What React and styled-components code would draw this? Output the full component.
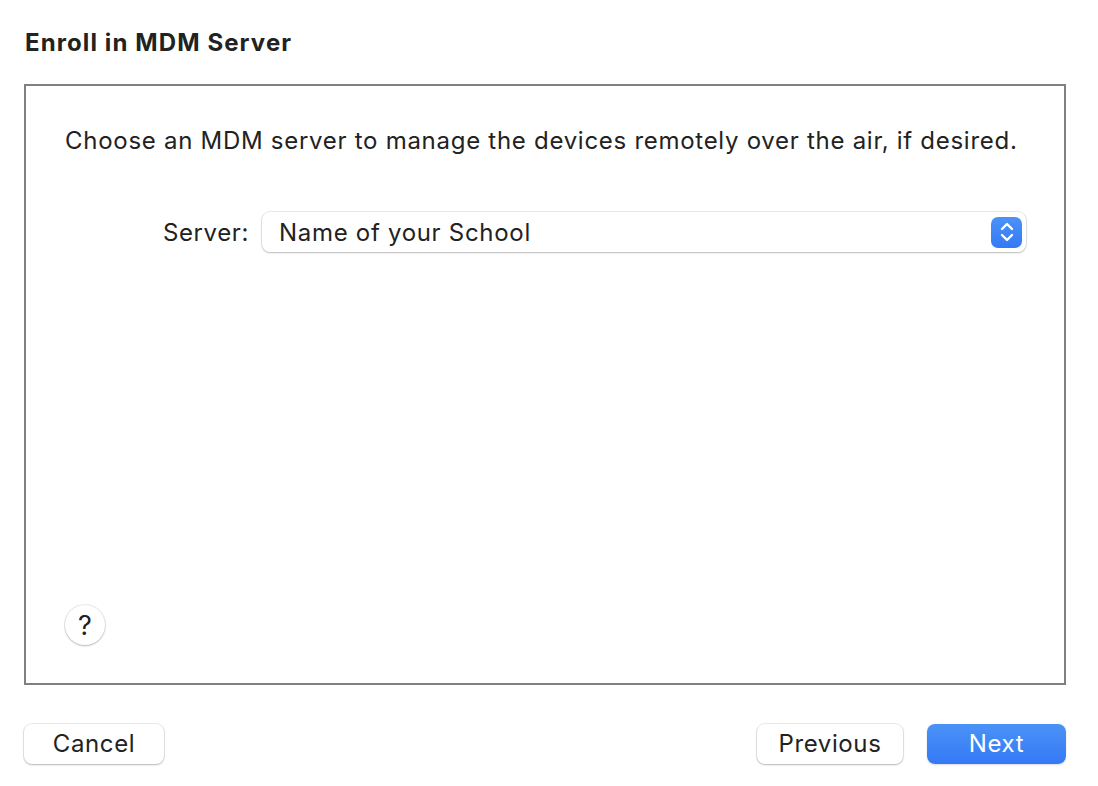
import React from 'react'
import styled, { createGlobalStyle } from 'styled-components'

const Global = createGlobalStyle`
  html, body {
    margin: 0;
    padding: 0;
    background: #fff;
  }
  body {
    font-family: Inter, 'Noto Sans', 'Liberation Sans', sans-serif;
    color: #222;
  }
`

const Page = styled.div`
  width: 1098px;
  height: 786px;
  box-sizing: border-box;
  padding: 28px 32px 0 24px;
  display: flex;
  flex-direction: column;
`

const Title = styled.h1`
  margin: 0 0 0 1px;
  font-size: 24px;
  line-height: 30px;
  font-weight: 700;
  letter-spacing: 1.1px;
  color: #222;
`

const Panel = styled.div`
  margin-top: 26px;
  height: 601px;
  box-sizing: border-box;
  border: 2px solid #808080;
  padding: 40px 38px 38px 39px;
  display: flex;
  flex-direction: column;
`

const Description = styled.p`
  margin: 0;
  font-size: 24px;
  line-height: 30px;
  letter-spacing: 0.72px;
  color: #222;
`

const FieldRow = styled.div`
  margin-top: 56px;
  display: flex;
  align-items: center;
  gap: 13px;
  padding-left: 98px;
`

const Label = styled.label`
  font-size: 24px;
  letter-spacing: 0.6px;
  color: #222;
`

const Select = styled.div`
  flex: 1;
  height: 40px;
  box-sizing: border-box;
  border-radius: 8px;
  background: #fff;
  box-shadow: 0 0 0 1px rgba(0, 0, 0, 0.08), 0 1px 2px rgba(0, 0, 0, 0.2);
  display: flex;
  align-items: center;
  justify-content: space-between;
  padding: 0 4px 0 17px;
  font-size: 24px;
  letter-spacing: 0.7px;
  color: #222;
`

const Stepper = styled.span`
  width: 31px;
  height: 31px;
  border-radius: 7px;
  background: linear-gradient(#4b92f7, #3479f5);
  display: flex;
  align-items: center;
  justify-content: center;
`

const Spacer = styled.div`
  flex: 1;
`

const Help = styled.button`
  width: 40px;
  height: 40px;
  border-radius: 50%;
  border: none;
  background: #fff;
  box-shadow: 0 0 0 1px rgba(0, 0, 0, 0.08), 0 1px 2px rgba(0, 0, 0, 0.22);
  font-family: inherit;
  font-size: 27px;
  font-weight: 400;
  color: #222;
  padding: 0;
  display: flex;
  align-items: center;
  justify-content: center;
`

const Footer = styled.div`
  margin-top: 39px;
  display: flex;
  align-items: center;
  gap: 24px;
`

const Button = styled.button`
  width: ${({ w }) => w}px;
  height: 40px;
  border-radius: 8px;
  border: none;
  font-family: inherit;
  font-size: 24px;
  letter-spacing: 0.6px;
  padding: 0 0 2px;
  background: ${({ primary }) => (primary ? 'linear-gradient(#4b92f7, #3479f5)' : '#fff')};
  color: ${({ primary }) => (primary ? '#fff' : '#222')};
  box-shadow: ${({ primary }) =>
    primary
      ? '0 1px 2px rgba(0, 0, 0, 0.15)'
      : '0 0 0 1px rgba(0, 0, 0, 0.08), 0 1px 2px rgba(0, 0, 0, 0.22)'};
`

const Grow = styled.div`
  flex: 1;
`

const Chevrons = () => (
  <svg width="16" height="22" viewBox="0 0 16 22" fill="none">
    <path d="M3 8 L8 3 L13 8" stroke="#fff" strokeWidth="2.4" strokeLinecap="round" strokeLinejoin="round" />
    <path d="M3 14 L8 19 L13 14" stroke="#fff" strokeWidth="2.4" strokeLinecap="round" strokeLinejoin="round" />
  </svg>
)

const App = () => (
  <>
    <Global />
    <Page>
      <Title>Enroll in MDM Server</Title>
      <Panel>
        <Description>
          Choose an MDM server to manage the devices remotely over the air, if desired.
        </Description>
        <FieldRow>
          <Label>Server:</Label>
          <Select>
            Name of your School
            <Stepper>
              <Chevrons />
            </Stepper>
          </Select>
        </FieldRow>
        <Spacer />
        <Help>?</Help>
      </Panel>
      <Footer>
        <Button w={140}>Cancel</Button>
        <Grow />
        <Button w={146}>Previous</Button>
        <Button w={139} primary>
          Next
        </Button>
      </Footer>
    </Page>
  </>
)

export default App
